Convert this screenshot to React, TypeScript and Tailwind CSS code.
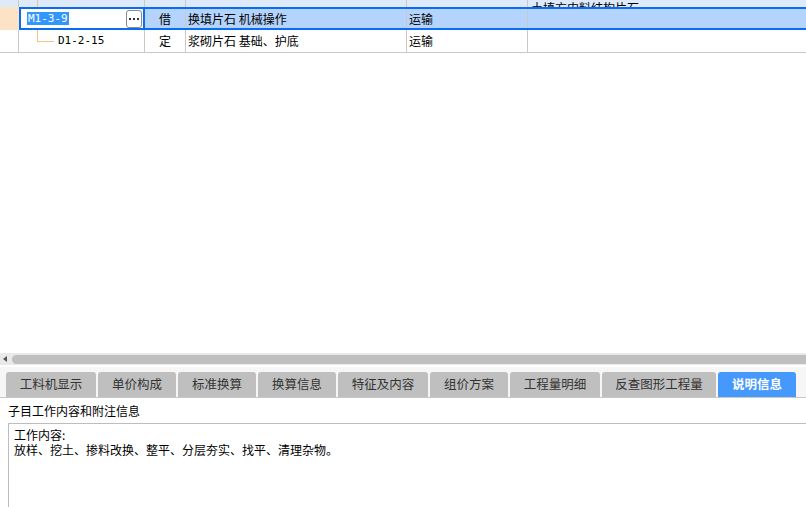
import { Fragment } from 'react'

const tabs = [
  { label: '工料机显示', w: 'w-[90px]' },
  { label: '单价构成', w: 'w-[78px]' },
  { label: '标准换算', w: 'w-[78px]' },
  { label: '换算信息', w: 'w-[78px]' },
  { label: '特征及内容', w: 'w-[90px]' },
  { label: '组价方案', w: 'w-[78px]' },
  { label: '工程量明细', w: 'w-[90px]' },
  { label: '反查图形工程量', w: 'w-[114px]' },
  { label: '说明信息', w: 'w-[78px]', active: true },
]

export default function App() {
  return (
    <div className="relative flex h-[507px] w-[806px] flex-col overflow-hidden bg-white text-[12px] text-black [font-family:'Noto_Sans_CJK_SC','Liberation_Sans',sans-serif]">
      {/* grid header (clipped) */}
      <div className="flex h-[7px] overflow-hidden bg-[#dee9fa]">
        <div className="w-[19px] shrink-0 border-r border-[#c9c9c9]" />
        <div className="relative w-[126px] shrink-0 border-r border-[#c9c9c9]">
          <div className="absolute left-[18px] top-0 h-full w-px bg-[#f7c27c]" />
        </div>
        <div className="w-[41px] shrink-0 border-r border-[#c9c9c9]" />
        <div className="w-[221px] shrink-0 border-r border-[#c9c9c9]" />
        <div className="w-[121px] shrink-0 border-r border-[#c9c9c9]" />
        <div className="relative flex-1 overflow-hidden">
          <span className="absolute bottom-[-8px] left-[3px] whitespace-nowrap leading-[14px]">土填方内料结构片石</span>
        </div>
      </div>

      {/* selected row */}
      <div className="flex h-[23px]">
        <div className="w-[19px] shrink-0 bg-[#fde3c6]" />
        <div className="flex flex-1 border-y-2 border-l-2 border-[#0a6cf4] bg-[#b4d4fd]">
          <div className="flex w-[124px] shrink-0 items-center justify-between border-r-2 border-[#0a6cf4] bg-white pl-[6px] pr-[1px]">
            <span className="bg-[#3297fd] px-[1px] text-[11px] leading-[13px] text-white [font-family:'DejaVu_Sans_Mono',monospace]">M1-3-9</span>
            <div className="flex h-[18px] w-[16px] shrink-0 items-center justify-center gap-[2px] rounded-[3px] border border-[#8a8a8a] bg-white">
              <div className="h-[2px] w-[2px] bg-[#333]" />
              <div className="h-[2px] w-[2px] bg-[#333]" />
              <div className="h-[2px] w-[2px] bg-[#333]" />
            </div>
          </div>
          <div className="flex w-[41px] shrink-0 items-center justify-center border-r border-[#c9c9c9]">借</div>
          <div className="flex w-[221px] shrink-0 items-center border-r border-[#c9c9c9] pl-[2px]">换填片石 机械操作</div>
          <div className="flex w-[121px] shrink-0 items-center border-r border-[#c9c9c9] pl-[2px]">运输</div>
          <div className="flex-1" />
        </div>
      </div>

      {/* child row */}
      <div className="flex h-[23px] border-b border-[#c9c9c9]">
        <div className="w-[19px] shrink-0 border-r border-[#c9c9c9]" />
        <div className="relative flex w-[126px] shrink-0 items-center border-r border-[#c9c9c9] pl-[39px]">
          <div className="absolute left-[18px] top-0 h-[11px] w-px bg-[#f7c27c]" />
          <div className="absolute left-[18px] top-[11px] h-px w-[17px] bg-[#f7c27c]" />
          <span className="text-[11px] [font-family:'DejaVu_Sans_Mono',monospace]">D1-2-15</span>
        </div>
        <div className="flex w-[41px] shrink-0 items-center justify-center border-r border-[#c9c9c9]">定</div>
        <div className="flex w-[221px] shrink-0 items-center border-r border-[#c9c9c9] pl-[2px]">浆砌片石 基础、护底</div>
        <div className="flex w-[121px] shrink-0 items-center border-r border-[#c9c9c9] pl-[2px]">运输</div>
        <div className="flex-1" />
      </div>

      <div className="flex-1" />

      {/* horizontal scrollbar */}
      <div className="flex h-[12px] items-center bg-[#e9e9e9]">
        <div className="ml-[3px] h-0 w-0 border-y-[3px] border-r-[4px] border-y-transparent border-r-[#555]" />
        <div className="ml-[5px] h-[9px] flex-1 rounded-l-full bg-[#bfbfbf]" />
      </div>

      {/* tabs */}
      <div className="mt-[2px] flex h-[31px] items-end gap-[2px] border-b border-[#c8c8c8] bg-[#f6f6f6] pl-[6px]">
        {tabs.map((t) => (
          <Fragment key={t.label}>
            <div
              className={
                t.active
                  ? `flex h-[25px] ${t.w} items-center justify-center rounded-t-[3px] bg-[#4599fd] text-[12.5px] font-bold text-white`
                  : `flex h-[25px] ${t.w} items-center justify-center rounded-t-[3px] bg-[#bfbfbf] text-[12.5px] text-[#333]`
              }
            >
              {t.label}
            </div>
          </Fragment>
        ))}
      </div>

      {/* description */}
      <div className="flex h-[109px] flex-col bg-white">
        <div className="h-[25px] pl-[8px] pt-[5px] leading-[15px]">子目工作内容和附注信息</div>
        <div className="ml-[8px] flex-1 border-l border-t border-[#bdbdbd] pl-[5px] pt-[3px]">
          <div className="leading-[15px]">工作内容:</div>
          <div className="leading-[15px]">放样、挖土、掺料改换、整平、分层夯实、找平、清理杂物。</div>
        </div>
      </div>
    </div>
  )
}
